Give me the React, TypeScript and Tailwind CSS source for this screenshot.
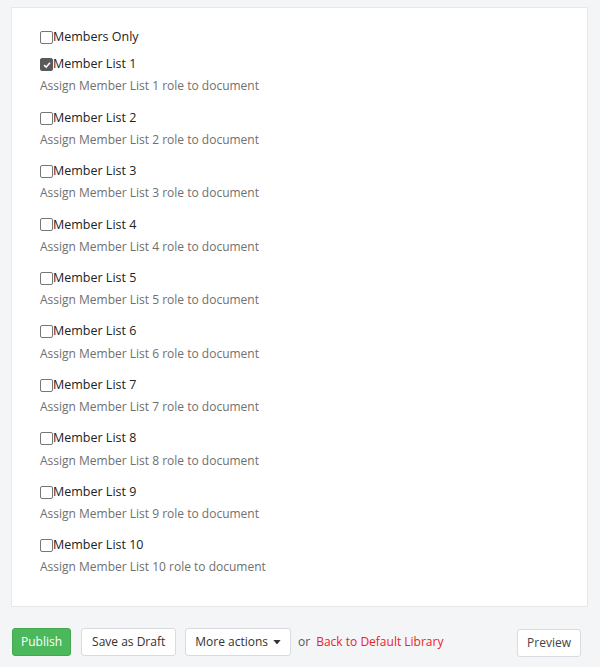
import { useState } from "react";

const lists = Array.from({ length: 10 }, (_, i) => i + 1);

function Check({ checked, onClick }: { checked: boolean; onClick: () => void }) {
  return (
    <span
      onClick={onClick}
      className={
        "inline-flex h-[13px] w-[13px] shrink-0 items-center justify-center rounded-[2px] border " +
        (checked ? "border-[#5a5a5a] bg-[#5a5a5a]" : "border-[#767676] bg-white")
      }
    >
      {checked && (
        <svg viewBox="0 0 12 12" className="h-[10px] w-[10px]">
          <path d="M2.5 6.2 L5 8.6 L9.6 3.4" fill="none" stroke="white" strokeWidth="1.9" />
        </svg>
      )}
    </span>
  );
}

export default function App() {
  const [checked, setChecked] = useState<number[]>([1]);
  const [membersOnly, setMembersOnly] = useState(false);

  function toggle(n: number) {
    setChecked((prev) => (prev.includes(n) ? prev.filter((x) => x !== n) : [...prev, n]));
  }

  return (
    <div
      className="min-h-[667px] bg-[#f4f5f7] px-[11px] pt-[7px] text-[12px]"
      style={{ fontFamily: '"Open Sans", sans-serif' }}
    >
      <div className="w-[577px] border border-[#e6e8eb] bg-white pl-[28px] pt-[21px] pb-[30px]">
        <label className="flex h-[17.72px] items-center text-[12.5px] text-[#222]">
          <Check checked={membersOnly} onClick={() => setMembersOnly(!membersOnly)} />
          Members Only
        </label>
        {lists.map((n) => (
          <div key={n} className={n === 1 ? "mt-[9px]" : "mt-[14px]"}>
            <label className="flex h-[17.72px] items-center text-[12.5px] text-[#222]">
              <Check checked={checked.includes(n)} onClick={() => toggle(n)} />
              Member List {n}
            </label>
            <p className="mt-[4px] leading-[17.72px] text-[#707070]">
              Assign Member List {n} role to document
            </p>
          </div>
        ))}
      </div>

      <div className="mt-[20px] flex items-center">
        <button className="ml-[1px] h-[28px] rounded-[3px] border border-[#43a94f] bg-[#4cb85c] px-[8px] text-white">
          Publish
        </button>
        <button className="ml-[10px] h-[28px] rounded-[3px] border border-[#d9dbde] bg-white px-[10px] text-[#333]">
          Save as Draft
        </button>
        <button className="ml-[9px] flex h-[28px] items-center gap-[5px] rounded-[3px] border border-[#d9dbde] bg-white px-[9px] text-[#333]">
          More actions
          <svg viewBox="0 0 8 5" className="h-[4.5px] w-[8px]">
            <path d="M0 0 H8 L4 5 Z" fill="#333" />
          </svg>
        </button>
        <span className="ml-[7px] text-[#555]">or</span>
        <a className="ml-[6px] text-[#e8232b]">Back to Default Library</a>
        <button className="ml-auto mr-[8px] mt-[2px] h-[28px] rounded-[3px] border border-[#d9dbde] bg-white px-[9px] text-[#444]">
          Preview
        </button>
      </div>
    </div>
  );
}
